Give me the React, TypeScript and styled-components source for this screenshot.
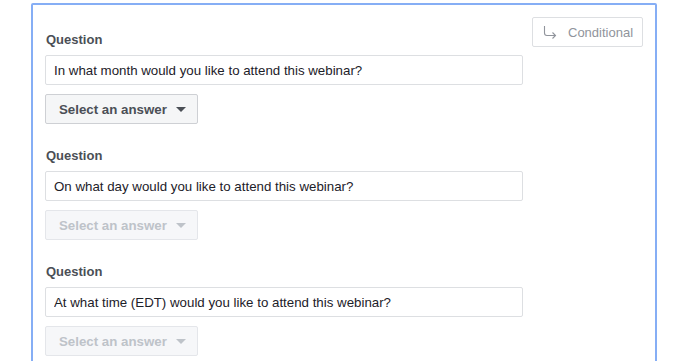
import React from 'react';
import styled, { createGlobalStyle } from 'styled-components';

const GlobalStyle = createGlobalStyle`
  html, body {
    margin: 0;
    padding: 0;
    background: #ffffff;
    overflow: hidden;
  }
  body {
    font-family: 'Liberation Sans', Arial, Helvetica, sans-serif;
  }
`;

const Page = styled.div`
  padding: 3px 0 0 31px;
  height: 361px;
  box-sizing: border-box;
`;

const Card = styled.div`
  width: 626px;
  min-height: 400px;
  box-sizing: border-box;
  border: 2px solid #86aef5;
  border-radius: 2px;
  padding: 12px 12px 0 12px;
  display: flex;
  justify-content: space-between;
  align-items: flex-start;
`;

const Questions = styled.div`
  width: 478px;
  padding-top: 15px;
  display: flex;
  flex-direction: column;
  gap: 24px;
`;

const Section = styled.div`
  display: flex;
  flex-direction: column;
  align-items: flex-start;
`;

const Label = styled.div`
  font-size: 13px;
  line-height: 16px;
  font-weight: bold;
  color: #4b4f56;
  padding-left: 1px;
  margin-bottom: 7px;
`;

const TextInput = styled.input`
  width: 100%;
  height: 30px;
  box-sizing: border-box;
  border: 1px solid #dddfe2;
  border-radius: 2px;
  padding: 0 8px;
  font-family: inherit;
  font-size: 13.3px;
  color: #1d2129;
  background: #ffffff;
  outline: none;
  margin-bottom: 9px;
`;

const SelectButton = styled.button<{ $disabled?: boolean }>`
  height: 30px;
  width: 153px;
  box-sizing: border-box;
  display: flex;
  align-items: center;
  gap: 9px;
  padding: 0 0 0 13px;
  border: 1px solid ${p => (p.$disabled ? '#e4e6ea' : '#ced0d4')};
  border-radius: 2px;
  background: ${p => (p.$disabled ? '#f6f7f9' : '#f5f6f7')};
  color: ${p => (p.$disabled ? '#bec3c9' : '#4b4f56')};
  font-family: inherit;
  font-size: 13.3px;
  font-weight: bold;
  cursor: pointer;
`;

const Caret = styled.span`
  width: 0;
  height: 0;
  border-left: 5px solid transparent;
  border-right: 5px solid transparent;
  border-top: 5px solid currentColor;
  margin-top: 1px;
`;

const ConditionalButton = styled.button`
  width: 111px;
  height: 30px;
  box-sizing: border-box;
  display: flex;
  align-items: center;
  gap: 11px;
  padding: 0 0 0 10px;
  border: 1px solid #dddfe2;
  border-radius: 2px;
  background: #ffffff;
  color: #90949c;
  font-family: inherit;
  font-size: 13px;
  cursor: pointer;
`;

const BranchIcon = () => (
  <svg width="14" height="15" viewBox="0 0 14 15" fill="none" stroke="#90949c" strokeWidth="1.1">
    <path d="M1.5 1v7c0 1.4 1 2.5 2.5 2.5h8.5" />
    <path d="M9.5 7.5l3 3-3 3" />
  </svg>
);

const questions = [
  { text: 'In what month would you like to attend this webinar?', disabled: false },
  { text: 'On what day would you like to attend this webinar?', disabled: true },
  { text: 'At what time (EDT) would you like to attend this webinar?', disabled: true },
];

export default function App() {
  return (
    <Page>
      <GlobalStyle />
      <Card>
        <Questions>
          {questions.map(q => (
            <Section key={q.text}>
              <Label>Question</Label>
              <TextInput defaultValue={q.text} />
              <SelectButton $disabled={q.disabled}>
                Select an answer
                <Caret />
              </SelectButton>
            </Section>
          ))}
        </Questions>
        <ConditionalButton>
          <BranchIcon />
          Conditional
        </ConditionalButton>
      </Card>
    </Page>
  );
}
